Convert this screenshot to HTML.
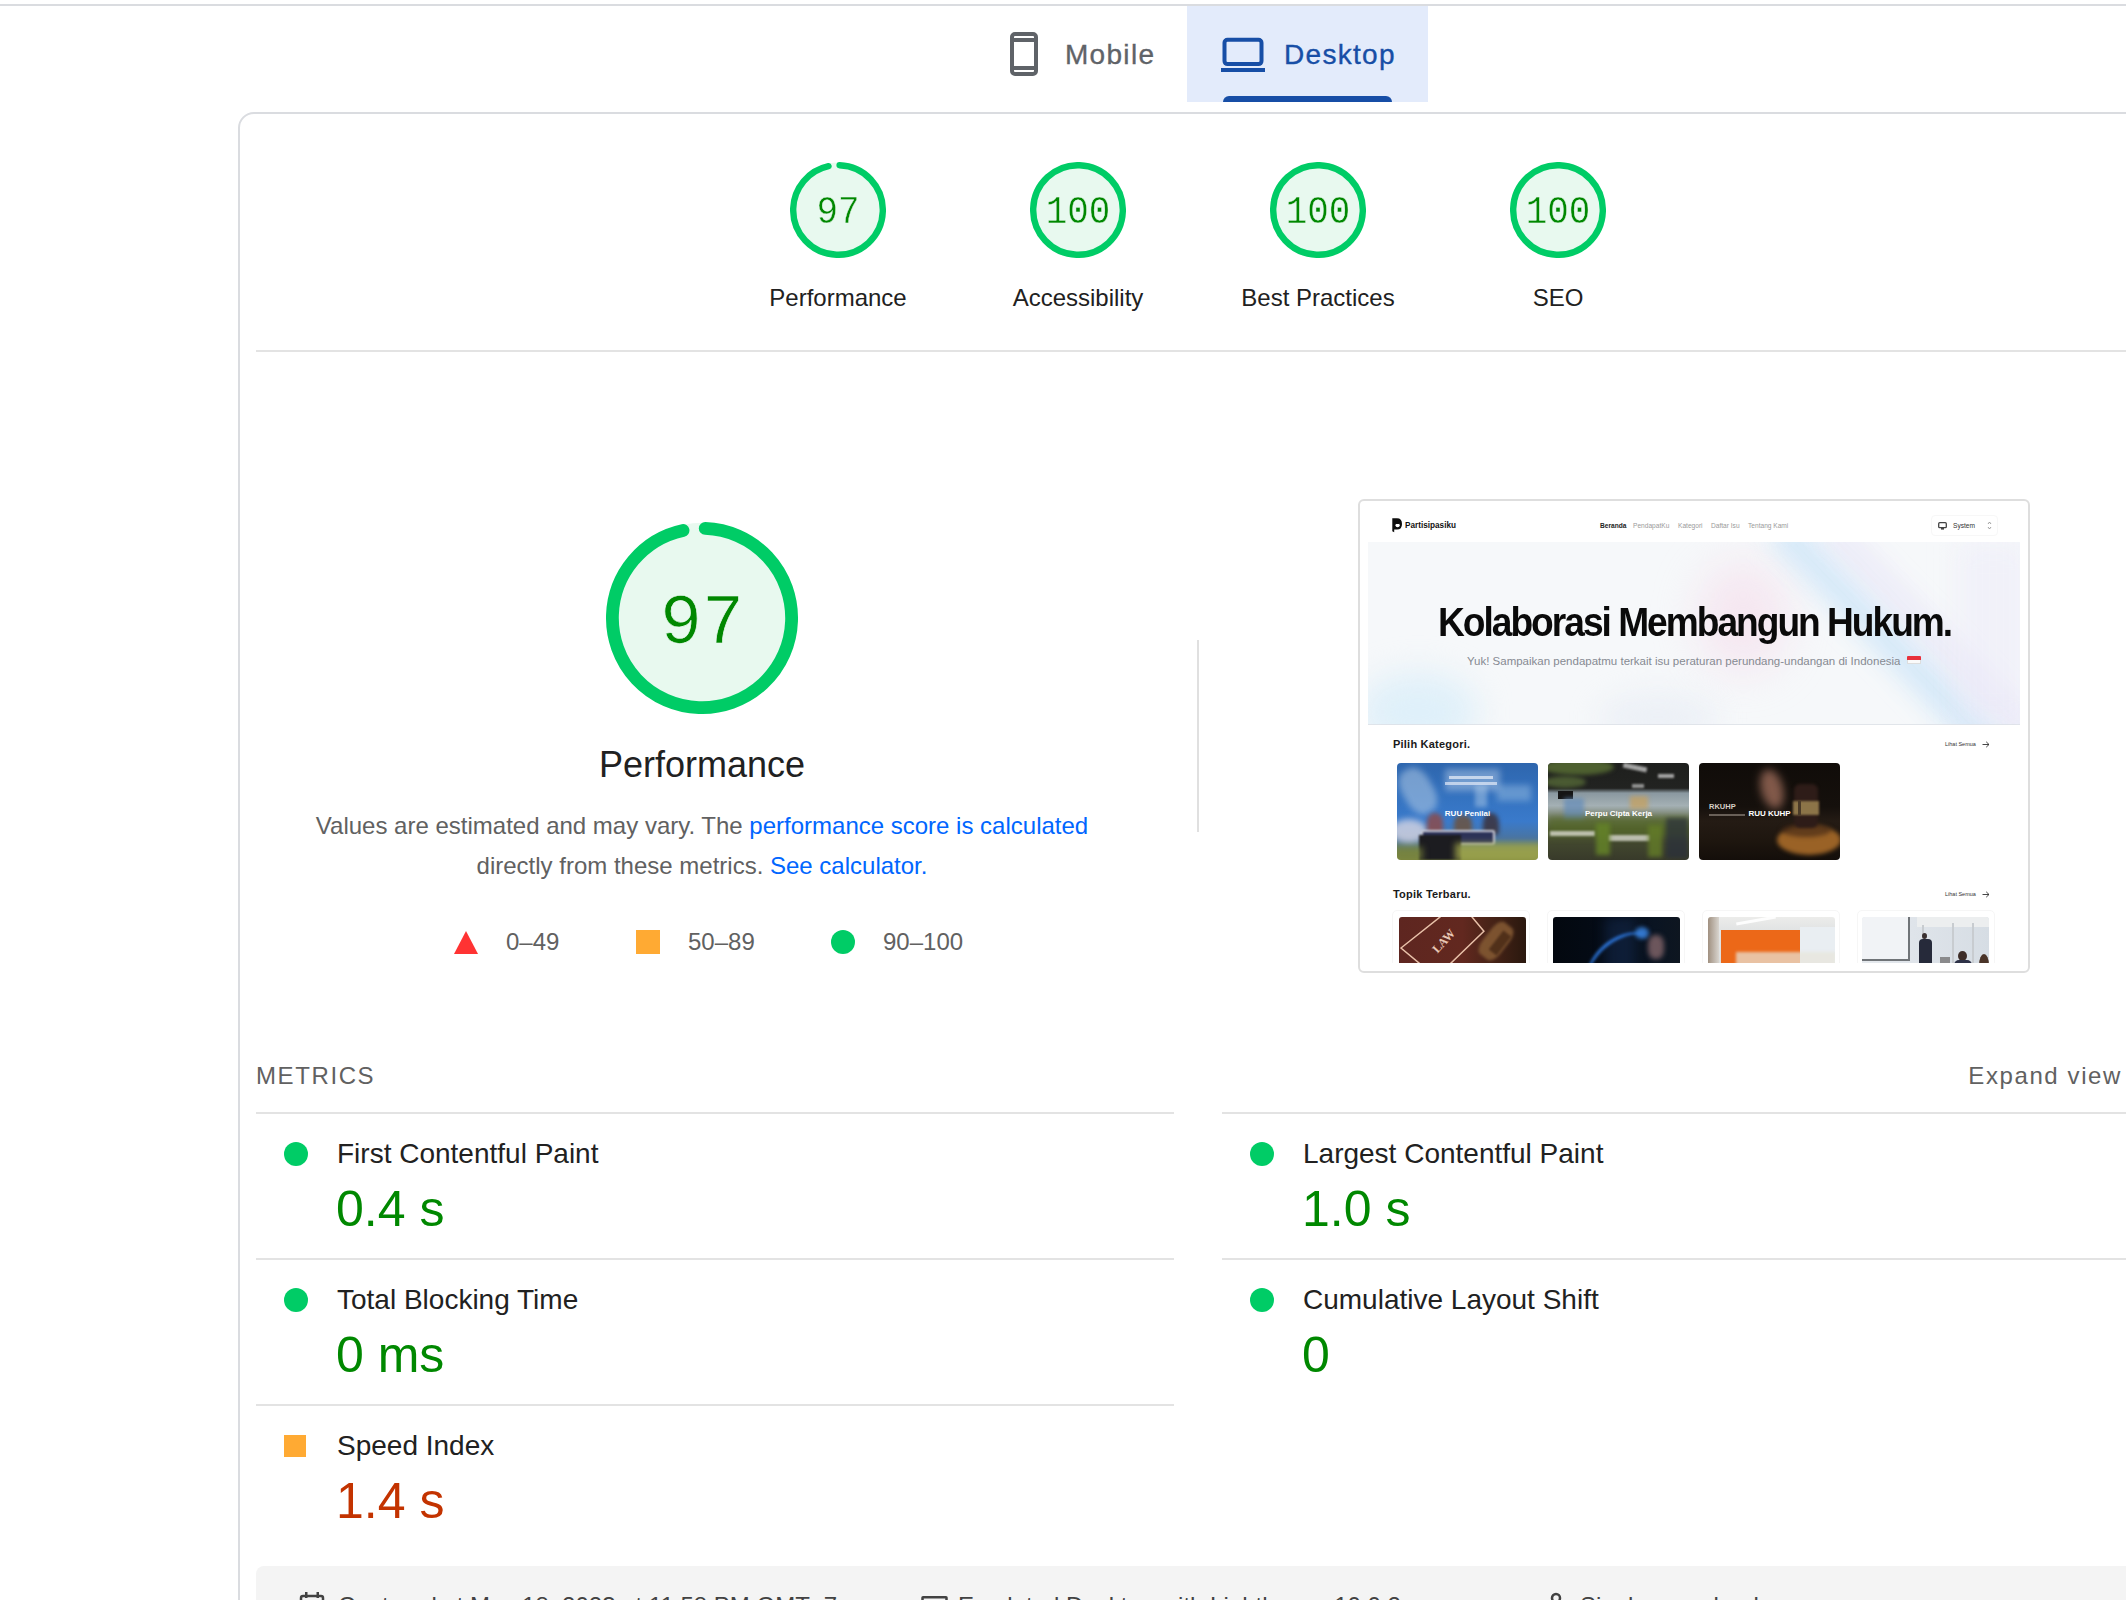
<!DOCTYPE html>
<html><head><meta charset="utf-8">
<style>
html,body{margin:0;padding:0;background:#fff;overflow:hidden;}
#root{position:relative;width:2126px;height:1600px;overflow:hidden;}
body{width:2126px;height:1600px;overflow:hidden;position:relative;font-family:"Liberation Sans",sans-serif;color:#212121;}
.a{position:absolute;}
.t{position:absolute;white-space:nowrap;line-height:1;}
#topline{left:0;top:4px;width:2126px;height:2px;background:#dadce0;}
#dtab{left:1187px;top:6px;width:241px;height:96px;background:#e3ebfb;}
#dind{left:1223px;top:96px;width:169px;height:6px;background:#174ea6;border-radius:6px 6px 0 0;}
.tabtxt{font-size:28px;letter-spacing:1.3px;-webkit-text-stroke:0.35px currentColor;}
#card{left:238px;top:112px;width:2100px;height:1700px;border:2px solid #dadce0;border-radius:16px;box-sizing:border-box;}
.glabel{font-size:24px;color:#212121;text-align:center;width:240px;}
.gnum{font-family:"Liberation Mono",monospace;color:#080;text-align:center;}
.sx{transform:scaleX(0.92);-webkit-text-stroke:0.45px #e8f9ef;}
#hr1{left:256px;top:350px;width:1900px;height:2px;background:#e3e3e3;}
#vdiv{left:1197px;top:640px;width:2px;height:192px;background:#e0e0e0;}
.desc{font-size:24px;color:#616161;}
.lnk{color:#0066ff;}
.mline{height:2px;background:#e3e3e3;}
.mtitle{font-size:28px;color:#212121;}
.mval{font-size:50px;color:#080;}
.dot{width:24px;height:24px;border-radius:50%;background:#0c6;}
.hdr{font-size:24px;color:#616161;letter-spacing:1.6px;}
#footer{left:256px;top:1566px;width:1900px;height:200px;background:#f4f4f4;border-radius:8px;}
.ftxt{font-size:24px;color:#424242;}
</style></head>
<body>
<div id="root">
<div class="a" id="topline"></div>

<!-- Mobile tab -->
<svg class="a" style="left:1008px;top:30px" width="32" height="48" viewBox="0 0 32 48">
  <rect x="4" y="4" width="24" height="40" rx="3" fill="none" stroke="#5f6368" stroke-width="4"/>
  <rect x="4" y="8" width="24" height="4" fill="#5f6368"/>
  <rect x="4" y="36" width="24" height="4" fill="#5f6368"/>
</svg>
<div class="t tabtxt" style="left:1065px;top:41px;color:#5f6368;">Mobile</div>

<!-- Desktop tab -->
<div class="a" id="dtab"></div>
<div class="a" id="dind"></div>
<svg class="a" style="left:1220px;top:36px" width="48" height="40" viewBox="0 0 48 40">
  <rect x="4.5" y="3.8" width="37" height="24.3" rx="3" fill="none" stroke="#174ea6" stroke-width="4"/>
  <rect x="1" y="32" width="44" height="4" fill="#174ea6"/>
</svg>
<div class="t tabtxt" style="left:1284px;top:41px;color:#174ea6;">Desktop</div>

<div class="a" id="card"></div>

<!-- gauges -->
<svg class="a" style="left:790px;top:162px" width="96" height="96" viewBox="0 0 120 120"><circle cx="60" cy="60" r="59.5" fill="#e8f9ef"/><circle cx="60" cy="60" r="56" fill="none" stroke="#0c6" stroke-width="8" stroke-linecap="round" stroke-dasharray="337.303 351.858" transform="rotate(-87.9537 60 60)"/></svg>
<div class="t gnum sx" style="left:778px;top:194.1px;width:120px;font-size:39px;">97</div>
<div class="t glabel" style="left:718px;top:285.8px;">Performance</div>
<svg class="a" style="left:1030px;top:162px" width="96" height="96" viewBox="0 0 120 120"><circle cx="60" cy="60" r="59.5" fill="#e8f9ef"/><circle cx="60" cy="60" r="56" fill="none" stroke="#0c6" stroke-width="8" stroke-linecap="round" stroke-dasharray="351.858 351.858" transform="rotate(-87.9537 60 60)"/></svg>
<div class="t gnum sx" style="left:1018px;top:194.1px;width:120px;font-size:39px;">100</div>
<div class="t glabel" style="left:958px;top:285.8px;">Accessibility</div>
<svg class="a" style="left:1270px;top:162px" width="96" height="96" viewBox="0 0 120 120"><circle cx="60" cy="60" r="59.5" fill="#e8f9ef"/><circle cx="60" cy="60" r="56" fill="none" stroke="#0c6" stroke-width="8" stroke-linecap="round" stroke-dasharray="351.858 351.858" transform="rotate(-87.9537 60 60)"/></svg>
<div class="t gnum sx" style="left:1258px;top:194.1px;width:120px;font-size:39px;">100</div>
<div class="t glabel" style="left:1198px;top:285.8px;">Best Practices</div>
<svg class="a" style="left:1510px;top:162px" width="96" height="96" viewBox="0 0 120 120"><circle cx="60" cy="60" r="59.5" fill="#e8f9ef"/><circle cx="60" cy="60" r="56" fill="none" stroke="#0c6" stroke-width="8" stroke-linecap="round" stroke-dasharray="351.858 351.858" transform="rotate(-87.9537 60 60)"/></svg>
<div class="t gnum sx" style="left:1498px;top:194.1px;width:120px;font-size:39px;">100</div>
<div class="t glabel" style="left:1438px;top:285.8px;">SEO</div>
<svg class="a" style="left:606px;top:522px" width="192" height="192" viewBox="0 0 120 120"><circle cx="60" cy="60" r="59.5" fill="#e8f9ef"/><circle cx="60" cy="60" r="56" fill="none" stroke="#0c6" stroke-width="8" stroke-linecap="round" stroke-dasharray="337.303 351.858" transform="rotate(-87.9537 60 60)"/></svg>
<div class="t gnum" style="left:602px;top:590.4px;width:200px;font-size:70px;-webkit-text-stroke:0.7px #e8f9ef;">97</div>
<div class="t" style="left:502px;top:746.9px;width:400px;text-align:center;font-size:36px;color:#212121;">Performance</div>
<div class="t desc" style="left:302px;top:813.9px;width:800px;text-align:center;">Values are estimated and may vary. The <span class="lnk">performance score is calculated</span></div>
<div class="t desc" style="left:302px;top:853.6px;width:800px;text-align:center;">directly from these metrics. <span class="lnk">See calculator.</span></div>
<svg class="a" style="left:454px;top:930px" width="24" height="24" viewBox="0 0 24 24"><polygon points="12,1 24,24 0,24" fill="#f33"/></svg>
<div class="t desc" style="left:506px;top:929.9px;">0–49</div>
<div class="a" style="left:636px;top:930px;width:24px;height:24px;background:#fa3;"></div>
<div class="t desc" style="left:688px;top:929.9px;">50–89</div>
<div class="a" style="left:831px;top:930px;width:24px;height:24px;border-radius:50%;background:#0c6;"></div>
<div class="t desc" style="left:883px;top:929.9px;">90–100</div>
<!-- metrics -->
<div class="t hdr" style="left:256px;top:1063.9px;">METRICS</div>
<div class="t hdr" style="right:4px;top:1063.9px;">Expand view</div>
<div class="a mline" style="left:256px;top:1112px;width:918px;"></div>
<div class="a mline" style="left:256px;top:1258px;width:918px;"></div>
<div class="a mline" style="left:256px;top:1404px;width:918px;"></div>
<div class="a mline" style="left:1222px;top:1112px;width:1000px;"></div>
<div class="a mline" style="left:1222px;top:1258px;width:1000px;"></div>
<div class="a dot" style="left:284px;top:1142px;"></div>
<div class="t mtitle" style="left:337px;top:1140.1px;">First Contentful Paint</div>
<div class="t mval" style="left:336px;top:1184.2px;color:#080;">0.4 s</div>
<div class="a dot" style="left:1250px;top:1142px;"></div>
<div class="t mtitle" style="left:1303px;top:1140.1px;">Largest Contentful Paint</div>
<div class="t mval" style="left:1302px;top:1184.2px;color:#080;">1.0 s</div>
<div class="a dot" style="left:284px;top:1288px;"></div>
<div class="t mtitle" style="left:337px;top:1286.1px;">Total Blocking Time</div>
<div class="t mval" style="left:336px;top:1330.2px;color:#080;">0 ms</div>
<div class="a dot" style="left:1250px;top:1288px;"></div>
<div class="t mtitle" style="left:1303px;top:1286.1px;">Cumulative Layout Shift</div>
<div class="t mval" style="left:1302px;top:1330.2px;color:#080;">0</div>
<div class="a" style="left:284px;top:1435px;width:22px;height:22px;background:#fa3;"></div>
<div class="t mtitle" style="left:337px;top:1432.1px;">Speed Index</div>
<div class="t mval" style="left:336px;top:1476.2px;color:#c33300;">1.4 s</div>
<!-- footer -->
<div class="a" id="footer"></div>
<div class="t ftxt" style="left:338px;top:1593.7px;">Captured at May 18, 2023 at 11:58 PM GMT+7</div>
<div class="t ftxt" style="left:958px;top:1593.7px;">Emulated Desktop with Lighthouse 10.0.2</div>
<div class="t ftxt" style="left:1580px;top:1593.7px;">Single page load</div>
<svg class="a" style="left:298px;top:1590px" width="28" height="28" viewBox="0 0 28 28"><rect x="3" y="6" width="22" height="20" rx="2" fill="none" stroke="#424242" stroke-width="2.5"/><rect x="7" y="2" width="2.5" height="6" fill="#424242"/><rect x="18.5" y="2" width="2.5" height="6" fill="#424242"/><rect x="3" y="10" width="22" height="2.5" fill="#424242"/></svg>
<svg class="a" style="left:920px;top:1594px" width="30" height="24" viewBox="0 0 30 24"><rect x="2.5" y="3.2" width="24" height="18" rx="0.5" fill="none" stroke="#424242" stroke-width="2.5"/></svg>
<svg class="a" style="left:1544px;top:1590px" width="24" height="24" viewBox="0 0 24 24"><circle cx="12" cy="8" r="4" fill="none" stroke="#424242" stroke-width="2.5"/></svg>

<div class="a" id="hr1"></div>

<div class="a" id="vdiv"></div>
<!-- screenshot -->
<div class="a" style="left:1358px;top:499px;width:672px;height:474px;border:2px solid #dedede;border-radius:6px;box-sizing:border-box;background:#fff;"></div>
<div class="a" id="ss" style="left:1368px;top:509px;width:652px;height:454px;overflow:hidden;background:#fff;">
  <!-- navbar -->
  <svg class="a" style="left:24px;top:9px" width="11" height="15" viewBox="0 0 11 15"><path d="M0.3 0.3 H5 Q10 0.3 10 6 Q10 11.5 5 11.5 H2.2 V14.3 L0.3 13.2 Z" fill="#0d0d0d"/><circle cx="5.6" cy="7.2" r="2.1" fill="#fff"/><rect x="3.5" y="4" width="4" height="2" fill="#0d0d0d"/></svg>
  <div class="t" style="left:37px;top:13px;font-size:8.2px;font-weight:bold;color:#111;">Partisipasiku</div>
  <div class="t" style="left:232px;top:14px;font-size:6.6px;font-weight:bold;color:#222;">Beranda</div>
  <div class="t" style="left:265px;top:14px;font-size:6.6px;color:#9a9a9a;">PendapatKu</div>
  <div class="t" style="left:310px;top:14px;font-size:6.6px;color:#9a9a9a;">Kategori</div>
  <div class="t" style="left:343px;top:14px;font-size:6.6px;color:#9a9a9a;">Daftar Isu</div>
  <div class="t" style="left:380px;top:14px;font-size:6.6px;color:#9a9a9a;">Tentang Kami</div>
  <div class="a" style="left:563px;top:6px;width:67px;height:21px;border:1px solid #f7f7f7;border-radius:4px;box-sizing:border-box;"></div>
  <svg class="a" style="left:570px;top:13px" width="9" height="8" viewBox="0 0 9 8"><rect x="0.7" y="0.7" width="7.6" height="5" rx="1" fill="none" stroke="#444" stroke-width="1.3"/><rect x="3" y="6" width="3" height="1.6" fill="#444"/></svg>
  <div class="t" style="left:585px;top:14px;font-size:6.6px;color:#333;">System</div>
  <svg class="a" style="left:619px;top:12px" width="5" height="9" viewBox="0 0 5 9"><path d="M1 3 L2.5 1 L4 3 M1 6 L2.5 8 L4 6" fill="none" stroke="#888" stroke-width="0.8"/></svg>
  <!-- hero -->
  <div class="a" id="hero" style="left:0;top:33px;width:652px;height:183px;background:#f3f6f9;overflow:hidden;">
    <div class="a" style="left:0;top:0;width:652px;height:183px;background:#f6f8fa;"></div>
    <div class="a" style="left:330px;top:20px;width:90px;height:110px;background:rgba(246,214,232,0.5);border-radius:50%;filter:blur(22px);"></div>
    <div class="a" style="left:505px;top:-60px;width:34px;height:320px;background:rgba(200,226,248,0.7);transform:rotate(-44deg);filter:blur(12px);"></div>
    <div class="a" style="left:560px;top:-60px;width:26px;height:320px;background:rgba(228,224,246,0.55);transform:rotate(-44deg);filter:blur(12px);"></div>
    <div class="a" style="left:590px;top:0px;width:70px;height:183px;background:rgba(234,232,248,0.45);filter:blur(14px);"></div>
    <div class="a" style="left:-10px;top:130px;width:120px;height:80px;background:rgba(214,236,250,0.7);border-radius:50%;filter:blur(16px);"></div>
    <div class="a" style="left:230px;top:150px;width:120px;height:50px;background:rgba(228,234,244,0.5);border-radius:50%;filter:blur(14px);"></div>
    <div class="t" style="left:70px;top:59.5px;font-size:41px;font-weight:bold;color:#0a0a0a;letter-spacing:-2.2px;transform:scaleX(0.905);transform-origin:0 0;">Kolaborasi Membangun Hukum.</div>
    <div class="t" style="left:99px;top:114px;font-size:11.5px;color:#868a92;">Yuk! Sampaikan pendapatmu terkait isu peraturan perundang-undangan di Indonesia</div>
    <div class="a" style="left:539px;top:114px;width:14px;height:4px;background:#e8323c;border-radius:1px 1px 0 0;"></div>
    <div class="a" style="left:539px;top:118px;width:14px;height:4px;background:#fafafa;border:0.5px solid #ddd;border-top:none;box-sizing:border-box;border-radius:0 0 1px 1px;"></div>
    <div class="a" style="left:0;top:182px;width:652px;height:1px;background:rgba(220,224,230,0.8);"></div>
  </div>
  <!-- categories -->
  <div class="t" style="left:25px;top:230px;font-size:11px;font-weight:bold;color:#1a1a1a;letter-spacing:0.22px;">Pilih Kategori.</div>
  <div class="t" style="left:577px;top:233px;font-size:5.5px;color:#333;">Lihat Semua</div>
  <svg class="a" style="left:614px;top:232px" width="8" height="7" viewBox="0 0 8 7"><path d="M0.5 3.5 H7 M4.2 0.8 L7 3.5 L4.2 6.2" fill="none" stroke="#333" stroke-width="0.9"/></svg>

  <div class="a cardimg" style="left:29px;top:254px;width:141px;height:97px;border-radius:4px;overflow:hidden;background:linear-gradient(180deg,#2e66ae 0%,#3574c2 40%,#3a7acb 60%,#4a74a0 78%,#6f8450 92%,#7f8a40 100%);">
    <div class="a" style="left:6px;top:4px;width:30px;height:48px;background:rgba(175,200,228,0.55);border-radius:40%;transform:rotate(-30deg);filter:blur(3px);"></div>
    <div class="a" style="left:48px;top:6px;width:55px;height:22px;background:rgba(190,210,235,0.45);filter:blur(3px);"></div>
    <div class="a" style="left:78px;top:22px;width:12px;height:22px;background:rgba(170,200,230,0.5);filter:blur(2px);"></div>
    <div class="a" style="left:100px;top:22px;width:34px;height:16px;background:rgba(160,195,228,0.45);filter:blur(3px);"></div>
    <div class="a" style="left:-6px;top:56px;width:36px;height:24px;background:rgba(225,222,232,0.75);border-radius:50%;filter:blur(3px);"></div>
    <div class="a" style="left:30px;top:50px;width:16px;height:20px;background:rgba(150,70,60,0.75);border-radius:45% 45% 20% 20%;filter:blur(2px);"></div>
    <div class="a" style="left:57px;top:52px;width:18px;height:18px;background:rgba(110,80,55,0.8);border-radius:45% 45% 20% 20%;filter:blur(2px);"></div>
    <div class="a" style="left:86px;top:50px;width:16px;height:22px;background:rgba(60,40,40,0.75);border-radius:45% 45% 20% 20%;filter:blur(2px);"></div>
    <div class="a" style="left:52px;top:13px;width:44px;height:3px;background:rgba(235,240,250,0.7);filter:blur(0.6px);"></div>
    <div class="a" style="left:48px;top:19px;width:52px;height:3px;background:rgba(235,240,250,0.65);filter:blur(0.6px);"></div>
    <div class="a" style="left:24px;top:67px;width:70px;height:11px;border:2px solid rgba(235,235,240,0.85);background:#2c3258;border-radius:2px;filter:blur(0.8px);"></div>
    <div class="a" style="left:22px;top:72px;width:42px;height:25px;background:#1c1c20;filter:blur(1px);"></div>
    <div class="a" style="left:58px;top:80px;width:88px;height:18px;background:rgba(160,165,75,0.8);filter:blur(3px);"></div>
    <div class="a" style="left:-4px;top:84px;width:30px;height:14px;background:rgba(120,130,60,0.7);filter:blur(3px);"></div>
    <div class="t" style="left:0;top:47px;width:141px;text-align:center;font-size:8px;font-weight:bold;color:#fff;">RUU Penilai</div>
  </div>
  <div class="a cardimg" style="left:180px;top:254px;width:141px;height:97px;border-radius:4px;overflow:hidden;background:linear-gradient(180deg,#1e1f1d 0%,#222321 26%,#8a98a0 31%,#a4b0b4 44%,#7a8470 55%,#4a5232 68%,#383a2a 100%);">
    <div class="a" style="left:-6px;top:-4px;width:72px;height:16px;background:#4e6030;border-radius:50%;filter:blur(2px);"></div>
    <div class="a" style="left:-4px;top:13px;width:42px;height:12px;background:#4a5a32;border-radius:50%;filter:blur(2px);"></div>
    <div class="a" style="left:75px;top:2px;width:24px;height:5px;background:rgba(220,220,220,0.7);transform:rotate(12deg);filter:blur(1px);"></div>
    <div class="a" style="left:110px;top:11px;width:16px;height:4px;background:rgba(220,220,220,0.7);filter:blur(1px);"></div>
    <div class="a" style="left:84px;top:21px;width:12px;height:4px;background:rgba(220,220,220,0.6);filter:blur(1px);"></div>
    <div class="a" style="left:10px;top:28px;width:15px;height:8px;background:#151515;filter:blur(0.6px);"></div>
    <div class="a" style="left:16px;top:35px;width:20px;height:22px;background:rgba(100,140,185,0.7);filter:blur(2px);"></div>
    <div class="a" style="left:82px;top:33px;width:18px;height:13px;background:rgba(200,160,90,0.7);filter:blur(2px);"></div>
    <div class="a" style="left:0;top:54px;width:141px;height:20px;background:rgba(85,105,40,0.7);filter:blur(3px);"></div>
    <div class="a" style="left:2px;top:68px;width:45px;height:5px;background:rgba(215,215,205,0.8);filter:blur(1px);"></div>
    <div class="a" style="left:60px;top:72px;width:42px;height:6px;background:rgba(215,215,205,0.8);filter:blur(1px);"></div>
    <div class="a" style="left:48px;top:60px;width:14px;height:32px;background:rgba(100,130,40,0.85);filter:blur(2px);"></div>
    <div class="a" style="left:100px;top:62px;width:14px;height:32px;background:rgba(100,125,40,0.8);filter:blur(2px);"></div>
    <div class="a" style="left:118px;top:55px;width:22px;height:40px;background:rgba(40,45,60,0.7);filter:blur(2px);"></div>
    <div class="t" style="left:0;top:47px;width:141px;text-align:center;font-size:8px;font-weight:bold;color:#fff;">Perpu Cipta Kerja</div>
  </div>
  <div class="a cardimg" style="left:331px;top:254px;width:141px;height:97px;border-radius:4px;overflow:hidden;background:linear-gradient(180deg,#100c09 0%,#15100c 45%,#241b14 60%,#1e160f 80%,#140e0a 100%);">
    <div class="a" style="left:62px;top:6px;width:22px;height:40px;background:rgba(175,120,100,0.7);border-radius:50%;transform:rotate(-15deg);filter:blur(4px);"></div>
    <div class="a" style="left:78px;top:62px;width:64px;height:30px;background:#9a6226;border-radius:50%;filter:blur(2px);"></div>
    <div class="a" style="left:82px;top:60px;width:50px;height:14px;background:rgba(60,35,20,0.6);border-radius:50%;filter:blur(2px);"></div>
    <div class="a" style="left:95px;top:21px;width:24px;height:44px;background:#2e1c18;border-radius:6px;filter:blur(1.5px);"></div>
    <div class="a" style="left:94px;top:38px;width:26px;height:14px;background:#8c7448;filter:blur(1px);"></div>
    <div class="a" style="left:99px;top:38px;width:3px;height:14px;background:#4a3a28;filter:blur(0.5px);"></div>
    <div class="t" style="left:10px;top:40px;font-size:7.5px;font-weight:bold;color:#d6cfc6;">RKUHP</div>
    <div class="a" style="left:10px;top:51px;width:36px;height:1.5px;background:rgba(180,170,160,0.5);"></div>
    <div class="t" style="left:0;top:47px;width:141px;text-align:center;font-size:8px;font-weight:bold;color:#fff;">RUU KUHP</div>
  </div>

  <!-- topics -->
  <div class="t" style="left:25px;top:380px;font-size:11px;font-weight:bold;color:#1a1a1a;letter-spacing:0.22px;">Topik Terbaru.</div>
  <div class="t" style="left:577px;top:383px;font-size:5.5px;color:#333;">Lihat Semua</div>
  <svg class="a" style="left:614px;top:382px" width="8" height="7" viewBox="0 0 8 7"><path d="M0.5 3.5 H7 M4.2 0.8 L7 3.5 L4.2 6.2" fill="none" stroke="#333" stroke-width="0.9"/></svg>

  <div class="a" style="left:24px;top:401px;width:138px;height:80px;border:1px solid #f6f6f6;border-radius:5px;box-sizing:border-box;"></div>
  <div class="a" style="left:179px;top:401px;width:138px;height:80px;border:1px solid #f6f6f6;border-radius:5px;box-sizing:border-box;"></div>
  <div class="a" style="left:334px;top:401px;width:138px;height:80px;border:1px solid #f6f6f6;border-radius:5px;box-sizing:border-box;"></div>
  <div class="a" style="left:489px;top:401px;width:138px;height:80px;border:1px solid #f6f6f6;border-radius:5px;box-sizing:border-box;"></div>

  <div class="a" style="left:31px;top:408px;width:127px;height:60px;border-radius:3px 3px 0 0;overflow:hidden;background:linear-gradient(90deg,#5e2620 0%,#62281f 50%,#4a2418 70%,#2a180e 100%);">
    <svg class="a" style="left:0;top:0" width="127" height="60" viewBox="0 0 127 60"><polygon points="2,31 60.3,-15.3 84.9,14.3 37.2,60.3" fill="none" stroke="#e8c0a8" stroke-width="1.5"/></svg>
    <div class="t" style="left:31px;top:18px;font-family:'Liberation Serif',serif;font-weight:bold;font-size:12px;color:#e8c6b4;transform:rotate(-48deg);">LAW</div>
    <div class="a" style="left:86px;top:4px;width:22px;height:40px;background:rgba(130,88,50,0.9);border-radius:30%;transform:rotate(38deg);filter:blur(1.5px);"></div>
    <div class="a" style="left:96px;top:14px;width:10px;height:24px;background:rgba(70,40,20,0.8);transform:rotate(38deg);filter:blur(1px);"></div>
  </div>
  <div class="a" style="left:185px;top:408px;width:127px;height:60px;border-radius:3px 3px 0 0;overflow:hidden;background:linear-gradient(90deg,#03080f 0%,#050c18 50%,#0a1422 80%,#0e1620 100%);">
    <div class="a" style="left:52px;top:0px;width:30px;height:60px;background:rgba(30,60,110,0.35);filter:blur(6px);"></div>
    <div class="a" style="left:30px;top:22px;width:72px;height:40px;border-top:3px solid #2f80f0;border-radius:50% 50% 0 0;transform:rotate(-38deg);filter:blur(1.6px);"></div>
    <div class="a" style="left:82px;top:10px;width:14px;height:12px;background:rgba(60,140,240,0.8);border-radius:50%;filter:blur(2px);"></div>
    <div class="a" style="left:95px;top:18px;width:16px;height:24px;background:rgba(190,140,140,0.55);border-radius:40%;filter:blur(2.5px);"></div>
  </div>
  <div class="a" style="left:340px;top:408px;width:127px;height:60px;border-radius:3px 3px 0 0;overflow:hidden;background:linear-gradient(180deg,#ececea 0%,#e2e4e4 20%,#d8dcdc 100%);">
    <div class="a" style="left:13px;top:13px;width:79px;height:47px;background:#ec6818;"></div>
    <div class="a" style="left:92px;top:10px;width:35px;height:40px;background:#e9eef2;"></div>
    <div class="a" style="left:0;top:0;width:11px;height:60px;background:linear-gradient(90deg,#a09080,#d8d4ce);"></div>
    <div class="a" style="left:28px;top:2px;width:40px;height:3px;background:rgba(255,255,255,0.9);transform:rotate(-10deg);"></div>
    <div class="a" style="left:28px;top:35px;width:100px;height:25px;background:rgba(232,228,218,0.72);filter:blur(1.5px);"></div>
  </div>
  <div class="a" style="left:494px;top:408px;width:127px;height:60px;border-radius:3px 3px 0 0;overflow:hidden;background:linear-gradient(90deg,#e6eaee 0%,#dfe4ea 40%,#d6dde4 100%);">
    <div class="a" style="left:55px;top:0;width:72px;height:10px;background:#eceeef;"></div>
    <div class="a" style="left:60px;top:8px;width:2px;height:52px;background:#c8ccd0;"></div>
    <div class="a" style="left:90px;top:6px;width:2px;height:54px;background:#c8ccd0;"></div>
    <div class="a" style="left:110px;top:6px;width:2px;height:54px;background:#c8ccd0;"></div>
    <div class="a" style="left:0;top:0;width:46px;height:42px;background:#f1f3f6;border-right:2px solid #707478;border-bottom:2px solid #707478;filter:blur(0.5px);"></div>
    <div class="a" style="left:60px;top:16px;width:5px;height:6px;background:#3a3030;border-radius:50%;"></div>
    <div class="a" style="left:57px;top:22px;width:13px;height:38px;background:#262a3a;border-radius:4px 4px 0 0;filter:blur(0.6px);"></div>
    <div class="a" style="left:78px;top:40px;width:10px;height:20px;background:#8a8a8c;filter:blur(0.6px);"></div>
    <div class="a" style="left:96px;top:34px;width:9px;height:10px;background:#3e2e28;border-radius:50%;filter:blur(0.6px);"></div>
    <div class="a" style="left:92px;top:43px;width:18px;height:17px;background:#2e3248;border-radius:5px 5px 0 0;filter:blur(0.6px);"></div>
    <div class="a" style="left:117px;top:37px;width:10px;height:23px;background:#4a3428;border-radius:50% 50% 0 0;filter:blur(0.6px);"></div>
    <div class="a" style="left:8px;top:54px;width:50px;height:6px;background:#555;border-radius:50% 50% 0 0;filter:blur(1px);"></div>
  </div>
</div>

</div>
</body></html>
